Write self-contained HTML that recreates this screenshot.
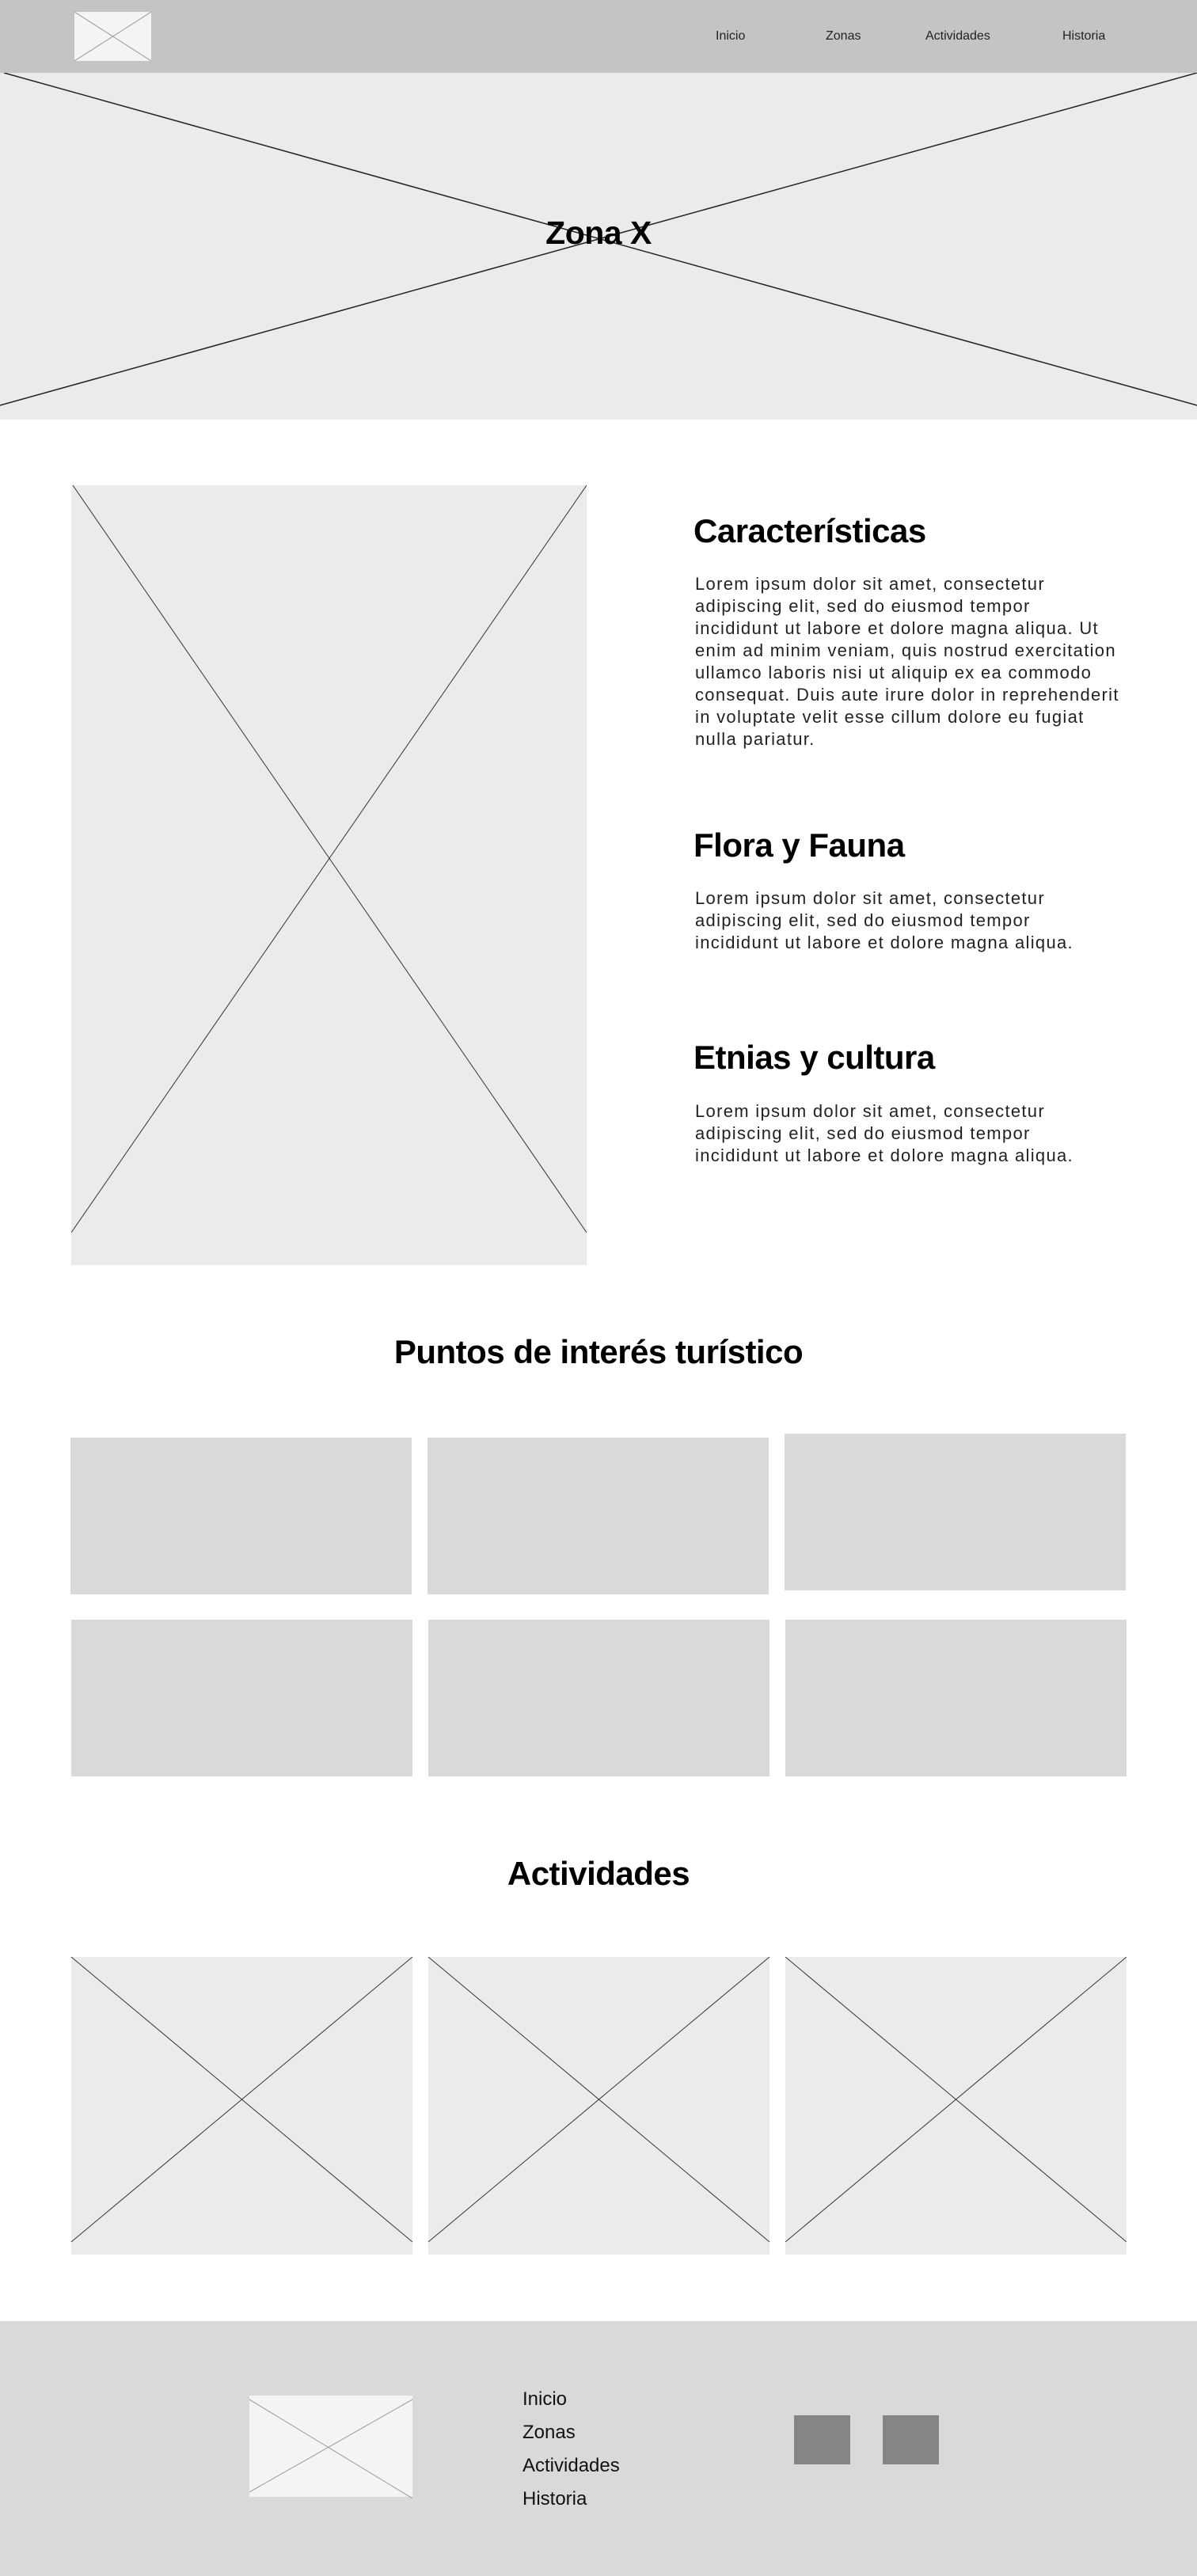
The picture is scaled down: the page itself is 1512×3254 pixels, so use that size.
<!DOCTYPE html>
<html><head><meta charset="utf-8"><style>
*{margin:0;padding:0;box-sizing:border-box}
body{width:1512px;height:3254px;position:relative;background:#fff;font-family:"Liberation Sans",sans-serif;color:#000;overflow:hidden}
.a{position:absolute}
svg.x{position:absolute;display:block}
.nav{font-size:16px;color:#222;top:36px;line-height:20px}
h2{position:absolute;font-size:42px;font-weight:bold;letter-spacing:-0.5px;line-height:46px;white-space:nowrap}
.p{position:absolute;left:878px;font-size:22px;line-height:28px;color:#222;white-space:nowrap;letter-spacing:1.3px}
.g{position:absolute;background:#d9d9d9;width:431px;height:198px}
.fl{position:absolute;left:660px;font-size:24px;color:#111;line-height:28px}
</style></head><body>
<div class="a" style="left:0;top:0;width:1512px;height:92px;background:#c4c4c4"></div>
<svg class="x" style="left:94px;top:15px" width="97" height="62"><rect width="97" height="62" fill="#f4f4f4"/><line x1="0" y1="0" x2="97" y2="62" stroke="#999"/><line x1="97" y1="0" x2="0" y2="62" stroke="#999"/></svg>
<div class="a nav" style="left:904px">Inicio</div>
<div class="a nav" style="left:1043px">Zonas</div>
<div class="a nav" style="left:1169px">Actividades</div>
<div class="a nav" style="left:1342px">Historia</div>

<svg class="x" style="left:0;top:92px" width="1512" height="438"><rect width="1512" height="438" fill="#ebebeb"/><line x1="5" y1="0" x2="1512" y2="420" stroke="#222" stroke-width="1.5"/><line x1="1512" y1="0" x2="0" y2="420" stroke="#222" stroke-width="1.5"/></svg>
<div class="a" style="left:0;width:1512px;top:270px;text-align:center;font-size:41px;font-weight:bold;line-height:48px;letter-spacing:-0.5px">Zona X</div>

<svg class="x" style="left:90px;top:613px" width="651" height="985"><rect width="651" height="985" fill="#ebebeb"/><line x1="2" y1="0" x2="651" y2="944" stroke="#333"/><line x1="651" y1="0" x2="0" y2="944" stroke="#333"/></svg>

<h2 style="left:876px;top:648px">Características</h2>
<div class="p" style="top:724px">Lorem ipsum dolor sit amet, consectetur<br>adipiscing elit, sed do eiusmod tempor<br>incididunt ut labore et dolore magna aliqua. Ut<br>enim ad minim veniam, quis nostrud exercitation<br>ullamco laboris nisi ut aliquip ex ea commodo<br>consequat. Duis aute irure dolor in reprehenderit<br>in voluptate velit esse cillum dolore eu fugiat<br>nulla pariatur.</div>
<h2 style="left:876px;top:1045px">Flora y Fauna</h2>
<div class="p" style="top:1121px">Lorem ipsum dolor sit amet, consectetur<br>adipiscing elit, sed do eiusmod tempor<br>incididunt ut labore et dolore magna aliqua.</div>
<h2 style="left:876px;top:1313px">Etnias y cultura</h2>
<div class="p" style="top:1390px">Lorem ipsum dolor sit amet, consectetur<br>adipiscing elit, sed do eiusmod tempor<br>incididunt ut labore et dolore magna aliqua.</div>

<h2 style="left:0;width:1512px;text-align:center;top:1685px">Puntos de interés turístico</h2>
<div class="g" style="left:89px;top:1816px"></div>
<div class="g" style="left:540px;top:1816px"></div>
<div class="g" style="left:991px;top:1811px"></div>
<div class="g" style="left:90px;top:2046px"></div>
<div class="g" style="left:541px;top:2046px"></div>
<div class="g" style="left:992px;top:2046px"></div>

<h2 style="left:0;width:1512px;text-align:center;top:2344px">Actividades</h2>
<svg class="x" style="left:90px;top:2472px" width="431" height="376"><rect width="431" height="376" fill="#ebebeb"/><line x1="0" y1="0" x2="431" y2="360" stroke="#333"/><line x1="431" y1="0" x2="0" y2="360" stroke="#333"/></svg>
<svg class="x" style="left:541px;top:2472px" width="431" height="376"><rect width="431" height="376" fill="#ebebeb"/><line x1="0" y1="0" x2="431" y2="360" stroke="#333"/><line x1="431" y1="0" x2="0" y2="360" stroke="#333"/></svg>
<svg class="x" style="left:992px;top:2472px" width="431" height="376"><rect width="431" height="376" fill="#ebebeb"/><line x1="0" y1="0" x2="431" y2="360" stroke="#333"/><line x1="431" y1="0" x2="0" y2="360" stroke="#333"/></svg>

<div class="a" style="left:0;top:2932px;width:1512px;height:322px;background:#d9d9d9"></div>
<svg class="x" style="left:315px;top:3026px" width="206" height="130"><rect width="206" height="128" fill="#f4f4f4"/><line x1="0" y1="5" x2="206" y2="130" stroke="#999"/><line x1="206" y1="5" x2="0" y2="122" stroke="#999"/></svg>
<div class="fl" style="top:3017px">Inicio</div>
<div class="fl" style="top:3059px">Zonas</div>
<div class="fl" style="top:3101px">Actividades</div>
<div class="fl" style="top:3143px">Historia</div>
<div class="a" style="left:1003px;top:3051px;width:71px;height:62px;background:#858585"></div>
<div class="a" style="left:1115px;top:3051px;width:71px;height:62px;background:#858585"></div>
</body></html>
